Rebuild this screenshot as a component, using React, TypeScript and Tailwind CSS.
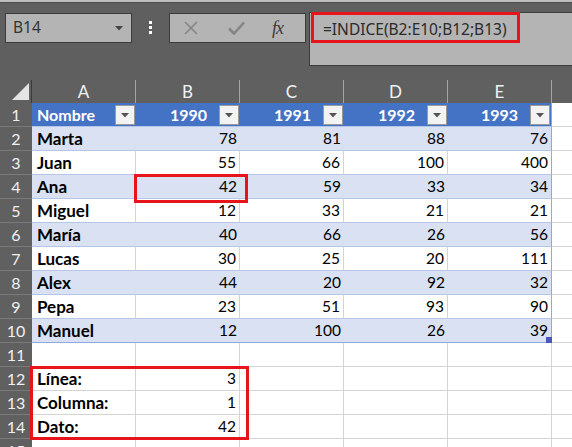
import React from 'react'

type RowData = { name: string; vals: (number | string)[] }

const DATA: RowData[] = [
  { name: 'Marta', vals: [78, 81, 88, 76] },
  { name: 'Juan', vals: [55, 66, 100, 400] },
  { name: 'Ana', vals: [42, 59, 33, 34] },
  { name: 'Miguel', vals: [12, 33, 21, 21] },
  { name: 'María', vals: [40, 66, 26, 56] },
  { name: 'Lucas', vals: [30, 25, 20, 111] },
  { name: 'Alex', vals: [44, 20, 92, 32] },
  { name: 'Pepa', vals: [23, 51, 93, 90] },
  { name: 'Manuel', vals: [12, 100, 26, 39] },
]

const LOOKUP: [string, string][] = [
  ['Línea:', '3'],
  ['Columna:', '1'],
  ['Dato:', '42'],
]

function RowHead({ n }: { n: number }) {
  return (
    <div className="w-[32px] shrink-0 h-full flex items-center justify-center bg-[#606060] text-[#f0f0f0] text-[16px] border-b border-[#7a7a7a]">
      {n}
    </div>
  )
}

function FilterButton() {
  return (
    <div className="absolute right-[1px] top-[2px] w-[20px] h-[20px] bg-[#f3f3f3] border border-[#9a9a9a] flex items-center justify-center">
      <svg width="8" height="5" viewBox="0 0 8 5">
        <path d="M0 0 H8 L4 4.5 Z" fill="#555" />
      </svg>
    </div>
  )
}

function FillerCell({ last }: { last?: boolean }) {
  return <div className={`w-[20px] shrink-0 h-full bg-white ${last ? '' : 'border-b border-[#d4d4d4]'}`} />
}

function Toolbar() {
  return (
    <div className="h-[80px] border-t-2 border-[#bebebe] bg-[#5f5f5f]">
      <div className="h-[1px] bg-[#4c4c4c]" />
      <div className="flex items-start pt-[10px] pl-[5px]">
        <div className="w-[127px] h-[30px] bg-[#b4b4b4] border border-[#3c3c3c] flex items-center justify-between pl-[7px] pr-[8px]">
          <span className="text-[15.5px] text-[#333] font-['Noto_Sans',sans-serif]">B14</span>
          <svg width="8" height="5" viewBox="0 0 8 5">
            <path d="M0 0 H8 L4 4.5 Z" fill="#444" />
          </svg>
        </div>
        <div className="w-[37px] flex flex-col items-center gap-[2px] pt-[8px]">
          <div className="w-[3px] h-[3px] bg-white" />
          <div className="w-[3px] h-[3px] bg-white" />
          <div className="w-[3px] h-[3px] bg-white" />
        </div>
        <div className="w-[137px] h-[30px] bg-[#b4b4b4] border border-[#3c3c3c] flex items-center">
          <svg className="ml-[14px]" width="14" height="14" viewBox="0 0 14 14">
            <path d="M1 1 L13 13 M13 1 L1 13" stroke="#858585" strokeWidth="1.6" fill="none" />
          </svg>
          <svg className="ml-[30px]" width="17" height="14" viewBox="0 0 17 14">
            <path d="M1 7.5 L6 12.5 L16 1.5" stroke="#858585" strokeWidth="2.6" fill="none" />
          </svg>
          <span className="ml-[27px] text-[18px] italic text-[#3a3a3a] font-['Liberation_Serif',serif] tracking-[-1px]">fx</span>
        </div>
        <div className="ml-[3px] flex-1 h-[54px] -mt-[1px] bg-[#b4b4b4] border-y border-l border-[#3c3c3c] pl-[13px] pt-[4px]">
          <span className="text-[15.5px] text-[#2b2b2b] font-['Noto_Sans',sans-serif]">=INDICE(B2:E10;B12;B13)</span>
        </div>
      </div>
    </div>
  )
}

function ColumnHeaders() {
  return (
    <div className="flex h-[23px] bg-[#606060]">
      <div className="w-[32px] shrink-0 h-full relative border-r border-[#3a3a3a]">
        <svg className="absolute left-[12px] top-[3px]" width="17" height="17" viewBox="0 0 17 17">
          <path d="M0 17 L17 17 L17 0 Z" fill="#e4e4e4" />
        </svg>
      </div>
      {['A', 'B', 'C', 'D', 'E'].map((c) => (
        <div
          key={c}
          className="w-[104px] shrink-0 h-full flex items-center justify-center text-[17px] text-[#f2f2f2] border-r border-[#a3a3a3]"
        >
          {c}
        </div>
      ))}
      <div className="w-[20px] shrink-0" />
    </div>
  )
}

export default function App() {
  return (
    <div className="w-[572px] h-[447px] overflow-hidden bg-white relative font-['Lato',sans-serif] text-black">
      <Toolbar />
      <ColumnHeaders />

      {/* table header */}
      <div className="flex h-[24px]">
        <RowHead n={1} />
        <div className="w-[104px] shrink-0 h-full bg-[#4472c4] relative border-b border-[#b4c6e7] flex items-center pl-[5px] pt-[1px] text-white font-bold text-[16px]">
          Nombre
          <FilterButton />
        </div>
        {['1990', '1991', '1992', '1993'].map((y, i) => (
          <div
            key={y}
            className={`w-[104px] shrink-0 h-full bg-[#4472c4] relative border-b border-[#b4c6e7] flex items-center justify-end pr-[33px] pt-[1px] text-white font-bold text-[16px] ${
              i === 3 ? 'border-r border-r-[#8ea9db]' : ''
            }`}
          >
            {y}
            <FilterButton />
          </div>
        ))}
        <FillerCell />
      </div>

      {DATA.map((r, idx) => {
        const banded = idx % 2 === 0
        const lastRow = idx === DATA.length - 1
        const bottom = lastRow ? 'border-b border-[#8ea9db]' : 'border-b border-[#b4c6e7]'
        const bg = banded ? 'bg-[#d9e1f2]' : 'bg-white'
        return (
          <div key={r.name} className="flex h-[24px]">
            <RowHead n={idx + 2} />
            <div
              className={`w-[104px] shrink-0 h-full ${bg} ${bottom} ${
                banded ? '' : 'border-r border-r-[#d4d4d4]'
              } flex items-center pl-[5px] pt-[1px] font-bold text-[17px]`}
            >
              {r.name}
            </div>
            {r.vals.map((v, i) => (
              <div
                key={i}
                className={`w-[104px] shrink-0 h-full ${bg} ${bottom} ${
                  i === 3 ? 'border-r border-r-[#8ea9db]' : banded ? '' : 'border-r border-r-[#d4d4d4]'
                } flex items-center justify-end pr-[3px] pt-[1px] text-[15.5px] relative`}
              >
                {v}
                {lastRow && i === 3 && (
                  <div className="absolute right-[-1px] bottom-[-1px] w-[6px] h-[6px] bg-[#4c58b5]" />
                )}
              </div>
            ))}
            <FillerCell />
          </div>
        )
      })}

      {/* row 11 */}
      <div className="flex h-[24px]">
        <RowHead n={11} />
        {[0, 1, 2, 3, 4].map((i) => (
          <div key={i} className="w-[104px] shrink-0 h-full border-b border-r border-[#d4d4d4]" />
        ))}
        <FillerCell />
      </div>

      {LOOKUP.map(([label, val], idx) => (
        <div key={label} className="flex h-[24px]">
          <RowHead n={12 + idx} />
          <div className="w-[104px] shrink-0 h-full border-b border-r border-[#d4d4d4] flex items-center pl-[5px] pt-[1px] font-bold text-[17px]">
            {label}
          </div>
          <div className="w-[104px] shrink-0 h-full border-b border-r border-[#d4d4d4] flex items-center justify-end pr-[3px] pt-[1px] text-[15.5px]">
            {val}
          </div>
          {[0, 1, 2].map((i) => (
            <div key={i} className="w-[104px] shrink-0 h-full border-b border-r border-[#d4d4d4]" />
          ))}
          <FillerCell />
        </div>
      ))}

      {/* row 15 (partially visible) */}
      <div className="flex h-[24px]">
        <RowHead n={15} />
        {[0, 1, 2, 3, 4].map((i) => (
          <div key={i} className="w-[104px] shrink-0 h-full border-r border-[#d4d4d4]" />
        ))}
        <FillerCell last />
      </div>

      {/* red highlight boxes */}
      <div className="absolute left-[311px] top-[12px] w-[209px] h-[31px] border-[3px] border-[#e8141c] pointer-events-none" />
      <div className="absolute left-[134px] top-[174px] w-[114px] h-[29px] border-[3px] border-[#e8141c] pointer-events-none" />
      <div className="absolute left-[30px] top-[366px] w-[219px] h-[74px] border-[3px] border-[#e8141c] pointer-events-none" />
    </div>
  )
}
